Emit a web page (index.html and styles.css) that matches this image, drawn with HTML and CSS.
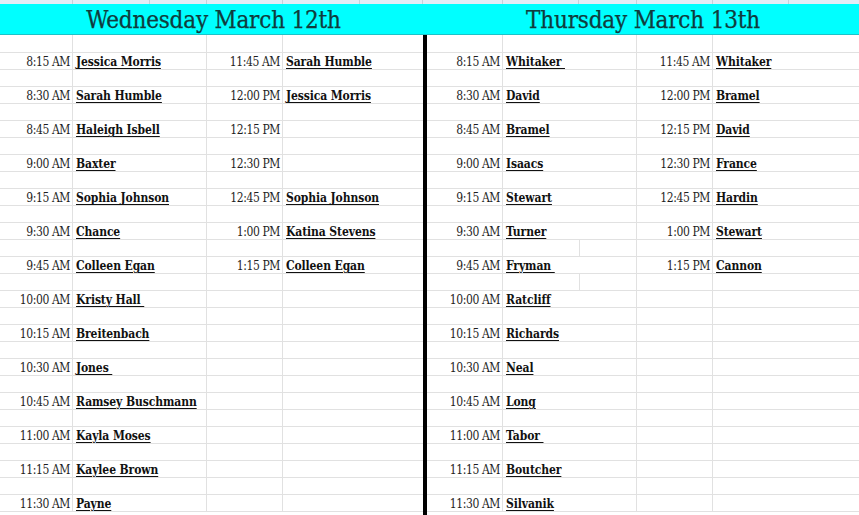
FILE: index.html
```html
<!DOCTYPE html>
<html>
<head>
<meta charset="utf-8">
<link rel="stylesheet" href="styles.css">
</head>
<body>
<div class="sheet">
  <div class="strip">
    <span class="w73"></span><span class="w77"></span><span class="w57"></span><span class="w76"></span><span class="w77"></span><span class="w63"></span>
    <span class="w80"></span><span class="w76"></span><span class="w58"></span><span class="w76"></span><span class="w76"></span><span class="grow"></span>
  </div>
  <div class="heads">
    <div class="head left">Wednesday March 12th</div>
    <div class="head right">Thursday March 13th</div>
  </div>
  <div class="body">
    <div class="sec sec-left">
      <div></div><div></div><div></div><div></div>
      <div class="t">8:15 AM</div><div class="n"><u>Jessica Morris</u></div><div class="t">11:45 AM</div><div class="n"><u>Sarah Humble</u></div>
      <div class="t">8:30 AM</div><div class="n"><u>Sarah Humble</u></div><div class="t">12:00 PM</div><div class="n"><u>Jessica Morris</u></div>
      <div class="t">8:45 AM</div><div class="n"><u>Haleigh Isbell</u></div><div class="t">12:15 PM</div><div class="n"></div>
      <div class="t">9:00 AM</div><div class="n"><u>Baxter</u></div><div class="t">12:30 PM</div><div class="n"></div>
      <div class="t">9:15 AM</div><div class="n"><u>Sophia Johnson</u></div><div class="t">12:45 PM</div><div class="n"><u>Sophia Johnson</u></div>
      <div class="t">9:30 AM</div><div class="n"><u>Chance</u></div><div class="t">1:00 PM</div><div class="n"><u>Katina Stevens</u></div>
      <div class="t">9:45 AM</div><div class="n"><u>Colleen Egan</u></div><div class="t">1:15 PM</div><div class="n"><u>Colleen Egan</u></div>
      <div class="t">10:00 AM</div><div class="n"><u>Kristy Hall&nbsp;</u></div><div class="t"></div><div class="n"></div>
      <div class="t">10:15 AM</div><div class="n"><u>Breitenbach</u></div><div class="t"></div><div class="n"></div>
      <div class="t">10:30 AM</div><div class="n"><u>Jones&nbsp;</u></div><div class="t"></div><div class="n"></div>
      <div class="t">10:45 AM</div><div class="n"><u>Ramsey Buschmann</u></div><div class="t"></div><div class="n"></div>
      <div class="t">11:00 AM</div><div class="n"><u>Kayla Moses</u></div><div class="t"></div><div class="n"></div>
      <div class="t">11:15 AM</div><div class="n"><u>Kaylee Brown</u></div><div class="t"></div><div class="n"></div>
      <div class="t last">11:30 AM</div><div class="n last"><u>Payne</u></div><div class="t last"></div><div class="n last"></div>
    </div>
    <div class="divider"></div>
    <div class="sec sec-right">
      <div></div><div></div><div></div><div></div>
      <div class="t">8:15 AM</div><div class="n"><u>Whitaker&nbsp;</u></div><div class="t">11:45 AM</div><div class="n"><u>Whitaker</u></div>
      <div class="t">8:30 AM</div><div class="n"><u>David</u></div><div class="t">12:00 PM</div><div class="n"><u>Bramel</u></div>
      <div class="t">8:45 AM</div><div class="n"><u>Bramel</u></div><div class="t">12:15 PM</div><div class="n"><u>David</u></div>
      <div class="t">9:00 AM</div><div class="n"><u>Isaacs</u></div><div class="t">12:30 PM</div><div class="n"><u>France</u></div>
      <div class="t">9:15 AM</div><div class="n"><u>Stewart</u></div><div class="t">12:45 PM</div><div class="n"><u>Hardin</u></div>
      <div class="t">9:30 AM</div><div class="n split"><u>Turner</u></div><div class="t">1:00 PM</div><div class="n"><u>Stewart</u></div>
      <div class="t">9:45 AM</div><div class="n split"><u>Fryman&nbsp;</u></div><div class="t">1:15 PM</div><div class="n"><u>Cannon</u></div>
      <div class="t">10:00 AM</div><div class="n"><u>Ratcliff</u></div><div class="t"></div><div class="n"></div>
      <div class="t">10:15 AM</div><div class="n"><u>Richards</u></div><div class="t"></div><div class="n"></div>
      <div class="t">10:30 AM</div><div class="n"><u>Neal</u></div><div class="t"></div><div class="n"></div>
      <div class="t">10:45 AM</div><div class="n"><u>Long</u></div><div class="t"></div><div class="n"></div>
      <div class="t">11:00 AM</div><div class="n"><u>Tabor&nbsp;</u></div><div class="t"></div><div class="n"></div>
      <div class="t">11:15 AM</div><div class="n"><u>Boutcher</u></div><div class="t"></div><div class="n"></div>
      <div class="t last">11:30 AM</div><div class="n last"><u>Silvanik</u></div><div class="t last"></div><div class="n last"></div>
    </div>
  </div>
</div>
</body>
</html>
```
FILE: styles.css
```css
html, body {
  margin: 0;
  padding: 0;
  background: #ffffff;
}
.sheet {
  width: 859px;
  height: 515px;
  overflow: hidden;
  font-family: "DejaVu Serif", "Liberation Serif", serif;
  font-stretch: condensed;
}
.strip {
  display: flex;
  height: 4px;
  background: #e5ecf6;
}
.strip span {
  border-right: 1px solid #c9d0da;
  box-sizing: border-box;
  flex: none;
}
.strip .grow { flex: 1; border-right: none; }
.w73 { width: 73px; }
.w77 { width: 77px; }
.w57 { width: 57px; }
.w76 { width: 76px; }
.w63 { width: 63px; }
.w80 { width: 80px; }
.w58 { width: 58px; }

.heads {
  display: flex;
  height: 31px;
  background: #0ff;
  border-bottom: 1px solid #1cc3c8;
  box-sizing: border-box;
  color: #103c3d;
  font-size: 24px;
  line-height: 33px;
  letter-spacing: -0.2px;
  -webkit-text-stroke: 0.25px #103c3d;
}
.head {
  text-align: center;
  white-space: nowrap;
}
.head.left { width: 427px; }
.head.right { flex: 1; }

.body {
  display: flex;
  height: 480px;
}
.divider {
  width: 4px;
  background: #000;
  flex: none;
}
.sec {
  display: grid;
  grid-template-rows: 18px repeat(13, 34px) 17px;
  align-content: start;
  font-size: 12px;
}
.sec-left {
  width: 423px;
  grid-template-columns: 73px 134px 76px 1fr;
}
.sec-right {
  flex: 1;
  grid-template-columns: 76px 134px 76px 1fr;
}
.sec > div {
  box-sizing: border-box;
  border-right: 1px solid #e1e1e1;
  border-bottom: 1px solid #e1e1e1;
  background: linear-gradient(to bottom, transparent 16px, #e1e1e1 16px, #e1e1e1 17px, transparent 17px);
  padding-top: 1px;
  line-height: 16px;
  white-space: nowrap;
}
.sec > div:first-child,
.sec > div:nth-child(2),
.sec > div:nth-child(3),
.sec > div:nth-child(4) {
  background: none;
}
.sec > div:nth-child(4n) { border-right: none; }
.sec > div.last { background: none; }
.t {
  text-align: right;
  padding-right: 2px;
  color: #1e1e1e;
  letter-spacing: -0.4px;
}
.n {
  padding-left: 3px;
  font-weight: bold;
  color: #111;
  letter-spacing: -0.1px;
}
.n u {
  text-decoration: underline;
  text-underline-offset: 2px;
  text-decoration-thickness: 1px;
}
.sec > div.split {
  background:
    linear-gradient(to right, transparent 76px, #e1e1e1 76px, #e1e1e1 77px, transparent 77px) 0 17px / 100% 16px no-repeat,
    linear-gradient(to bottom, transparent 16px, #e1e1e1 16px, #e1e1e1 17px, transparent 17px);
}
```
